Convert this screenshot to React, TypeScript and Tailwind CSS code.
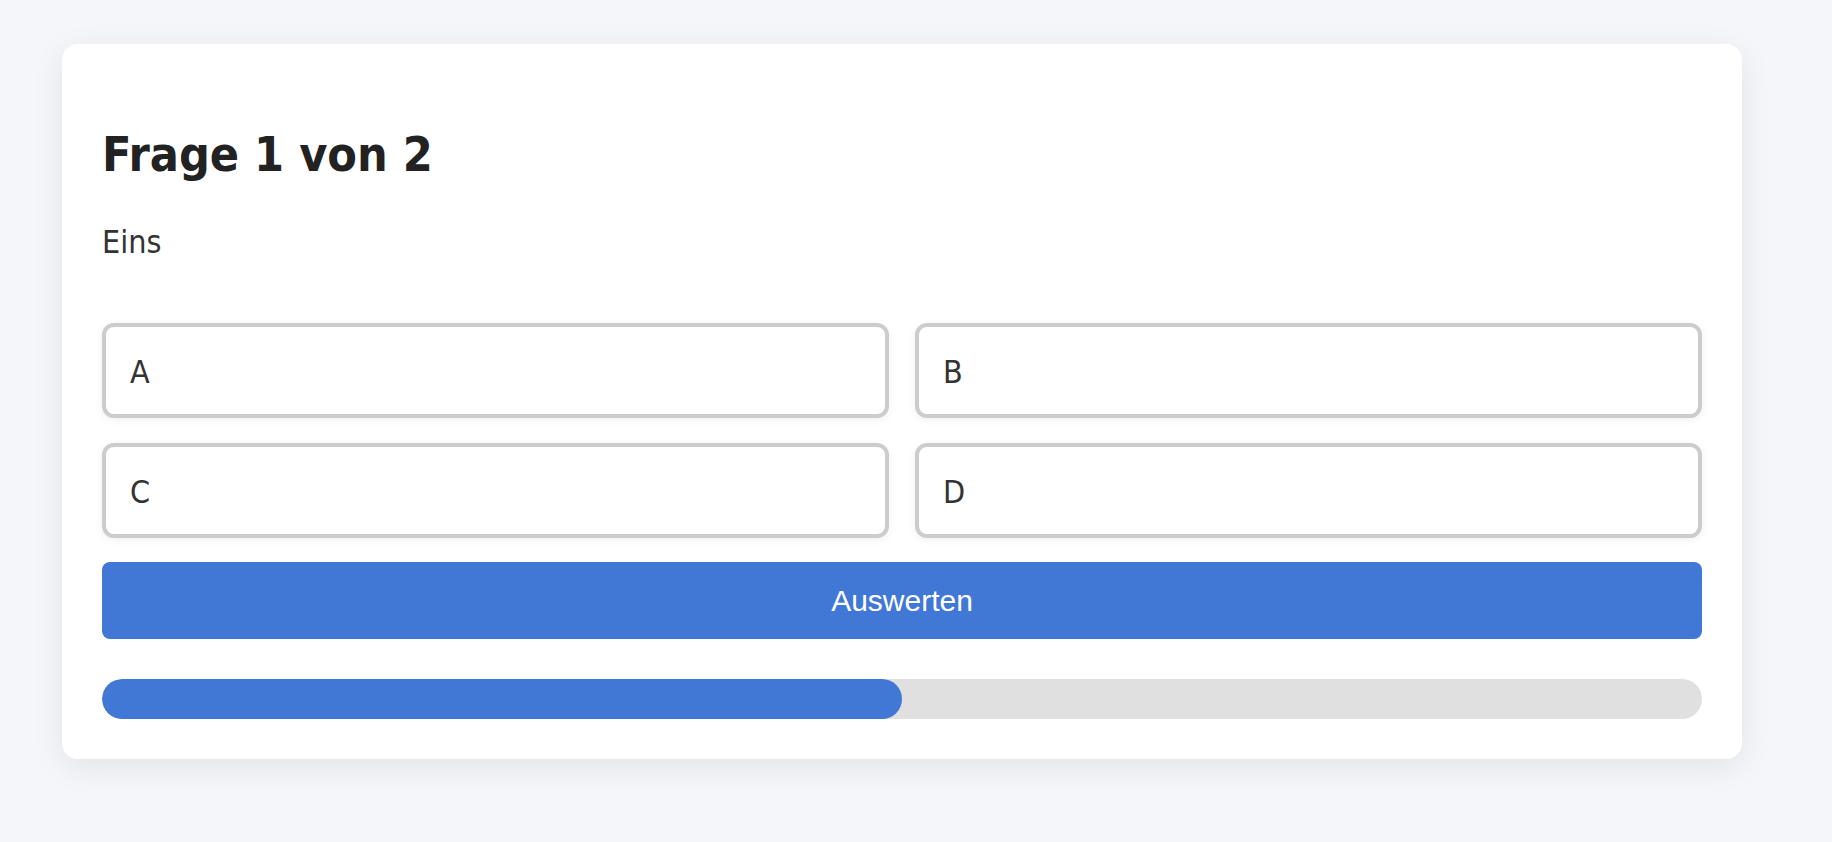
// Quiz-Karte: Frage, Antwortoptionen, Auswerten-Button und Fortschritt.

const options = ['A', 'B', 'C', 'D']

const current = 1
const total = 2

export default function App() {
  const progress = (current / total) * 100

  return (
    <div className="min-h-screen bg-[#f5f6fa] pt-[44px] pl-[62px] font-['DejaVu_Sans',sans-serif] font-stretch-condensed">
      <div className="w-[1680px] rounded-2xl bg-white px-[40px] pt-[40px] pb-[40px] shadow-[0_8px_32px_rgba(0,0,0,0.08)]">
        <h2 className="mt-[41px] text-[48px] leading-[58px] font-bold text-[#222]">
          Frage {current} von {total}
        </h2>
        <p className="mt-[40px] text-[32px] leading-[38px] text-[#333]">Eins</p>

        <div className="mt-[62px] grid grid-cols-2 gap-x-[26px] gap-y-[25px]">
          {options.map((o) => (
            <button
              key={o}
              className="rounded-[12px] border-4 border-[#cccccc] bg-white px-[24px] pt-[26px] pb-[23px] text-left text-[32px] leading-[38px] text-[#333] shadow-[0_2px_8px_rgba(0,0,0,0.06)]"
            >
              {o}
            </button>
          ))}
        </div>

        <button className="mt-[24px] flex h-[77px] w-full items-center justify-center rounded-[8px] bg-[#4178d6] font-['Liberation_Sans',Arial,sans-serif] text-[30px] text-white">
          Auswerten
        </button>

        <div className="mt-[40px] h-[40px] w-full overflow-hidden rounded-full bg-[#e0e0e0]">
          <div className="h-full rounded-full bg-[#4178d6]" style={{ width: `${progress}%` }} />
        </div>
      </div>
    </div>
  )
}
